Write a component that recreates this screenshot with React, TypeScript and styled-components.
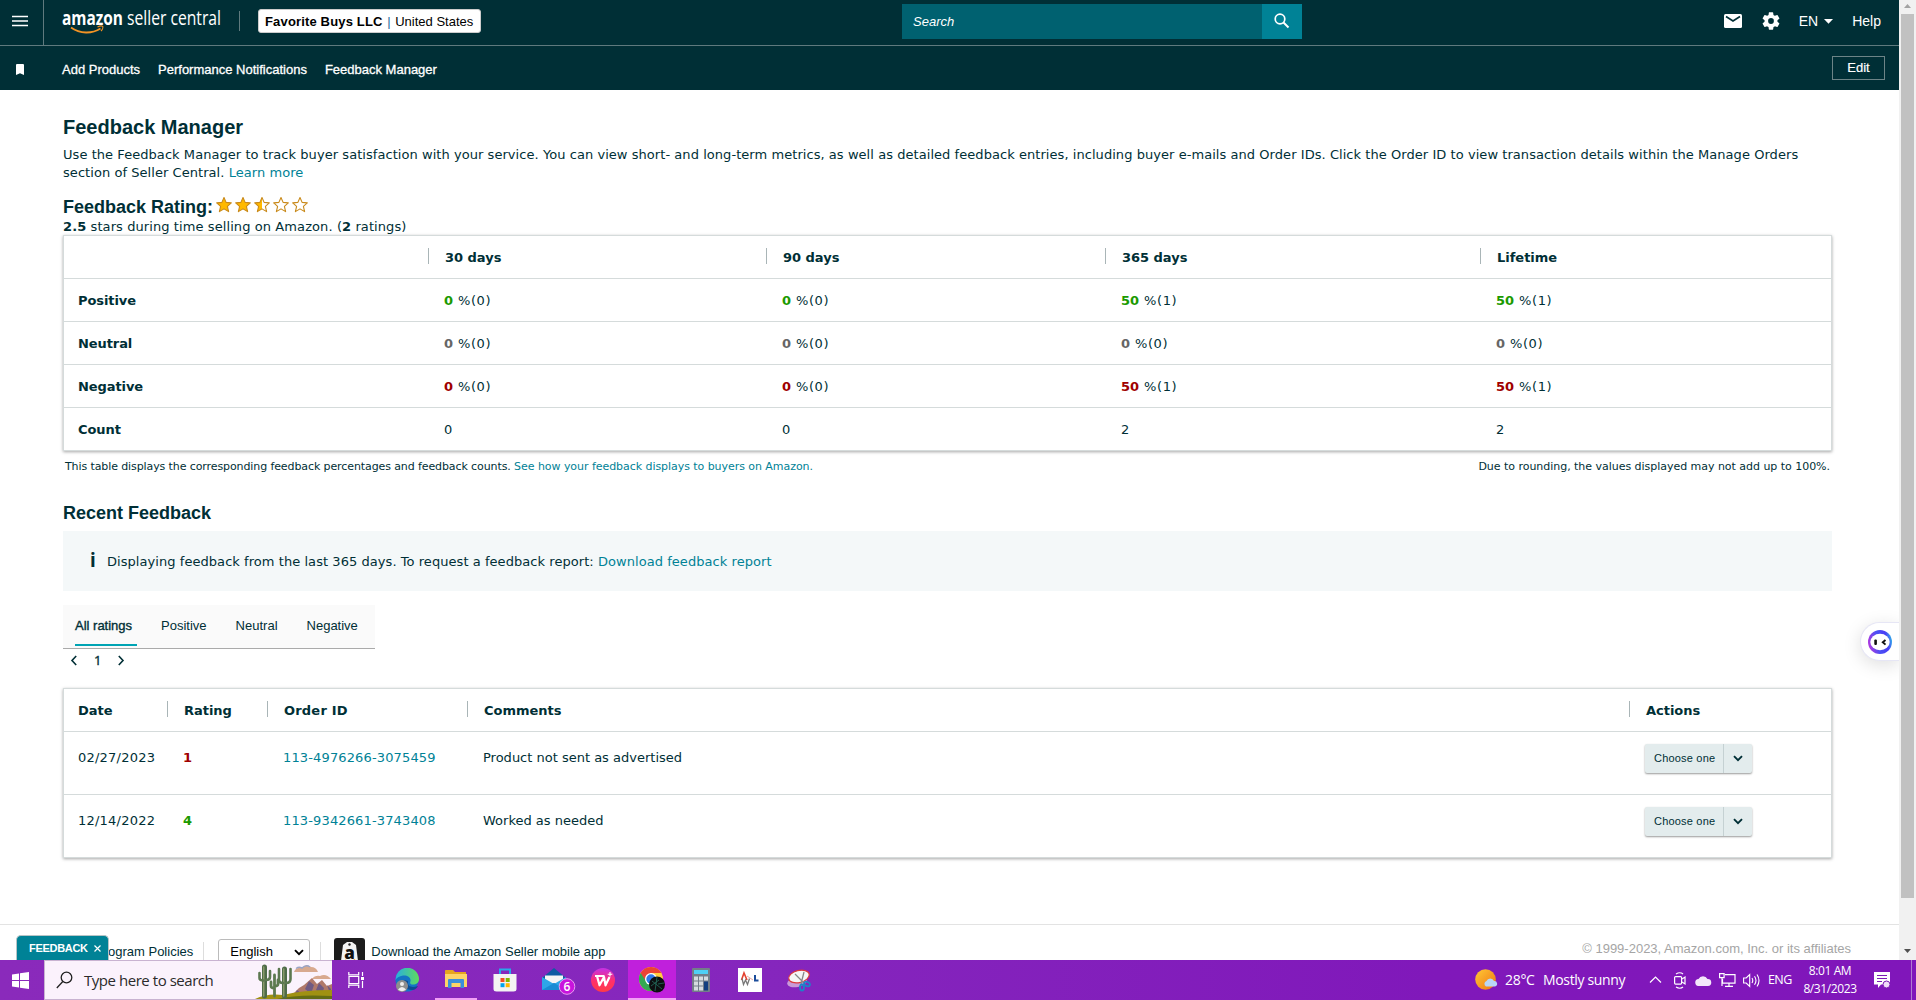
import React from "react";
import styled, { createGlobalStyle } from "styled-components";

const ARIAL = '"Liberation Sans", Arial, sans-serif';
const VERDANA = '"DejaVu Sans", Verdana, sans-serif';
const SEGOE = '"Open Sans", "Segoe UI", sans-serif';
const INK = "#002f36";
const LINK = "#008296";
const LINE = "#d5dbdb";

const Global = createGlobalStyle`
  html, body { margin: 0; padding: 0; background: #fff; overflow: hidden; }
  *, *::before, *::after { box-sizing: border-box; }
  h1, h2, p { margin: 0; }
  svg { display: block; flex: none; }
`;

const Screen = styled.div`
  width: 1916px;
  height: 1000px;
  display: flex;
  flex-direction: column;
  overflow: hidden;
  color: ${INK};
  font: 13px/18px ${VERDANA};
`;

const Viewport = styled.div`
  height: 960px;
  display: flex;
`;

const Page = styled.div`
  position: relative;
  width: 1899px;
  height: 960px;
  display: flex;
  flex-direction: column;
  overflow: hidden;
  background: #fff;
`;

/* ---------- header ---------- */
const TopBar = styled.header`
  flex: none;
  height: 46px;
  display: flex;
  background: ${INK};
  border-bottom: 1px solid #5f7a7e;
  color: #fff;
  font: 14px/20px ${ARIAL};
`;

const MenuCell = styled.div`
  width: 44px;
  padding: 15px 0 0 12px;
  border-right: 1px solid #5f7a7e;
`;

const Brand = styled.div`
  width: 196px;
  padding: 11px 0 0 18px;
  display: flex;
  justify-content: space-between;
`;

const BrandRule = styled.div`
  width: 1px;
  height: 20px;
  background: #5f7a7e;
`;

const StoreBadge = styled.div`
  width: 223px;
  height: 24px;
  margin: 9px 1px 0 18px;
  padding: 1px 0 0 6px;
  border: 1px solid #ccc;
  border-radius: 3px;
  background: #fff;
  color: #000;
  white-space: nowrap;
  font-size: 13px;
  line-height: 21px;

  b { letter-spacing: 0.16px; }
  i { font-style: normal; color: #2c6f9c; margin: 0 1px; }
`;

const SearchBox = styled.div`
  width: 400px;
  height: 35px;
  margin: 4px 0 0 420px;
  display: flex;
  background: #006170;
  font: italic 13px/35px ${ARIAL};
  padding-left: 11px;
  justify-content: space-between;
`;

const SearchButton = styled.div`
  width: 40px;
  height: 35px;
  display: flex;
  align-items: center;
  justify-content: center;
  padding-bottom: 2px;
  background: #008296;
`;

const HeaderTools = styled.div`
  margin-left: auto;
  padding: 0 18px 3px 0;
  display: flex;
  align-items: center;
`;

const Language = styled.div`
  display: flex;
  align-items: center;
  gap: 6px;
  margin: 0 19px 0 19px;
`;

const Gear = styled.span`
  margin-left: 20px;
`;

const NavBar = styled.nav`
  flex: none;
  height: 44px;
  display: flex;
  align-items: center;
  padding: 2px 14px 0 16px;
  background: ${INK};
  color: #fff;
  font: 13px/18px ${ARIAL};
`;

const NavLinks = styled.div`
  display: flex;
  gap: 18px;
  margin: 1px 0 0 38px;
  -webkit-text-stroke: 0.3px #fff;
`;

const EditButton = styled.div`
  width: 53px;
  height: 24px;
  margin: -2px 0 0 auto;
  border: 1px solid #6d8487;
  text-align: center;
  line-height: 22px;
  -webkit-text-stroke: 0.2px #fff;
`;

/* ---------- main content ---------- */
const Main = styled.main`
  display: flex;
  flex-direction: column;
  padding: 25px 67px 0 63px;
`;

const Title = styled.h1`
  font: bold 20px/24px ${ARIAL};
`;

const Intro = styled.p`
  margin-top: 7px;
  height: 36px;
  white-space: nowrap;
  letter-spacing: 0.055px;
`;

const Link = styled.span`
  color: ${LINK};
`;

const RatingHeading = styled.h2`
  margin-top: 14px;
  display: flex;
  gap: 3px;
  font: bold 18px/22px ${ARIAL};
`;

const Stars = styled.div`
  display: flex;
  gap: 3px;
`;

const RatingSummary = styled.p`
  height: 17px;
  line-height: 17px;
  letter-spacing: 0.09px;
`;

const TableFrame = styled.div`
  border: 1px solid ${LINE};
  box-shadow: 0 1px 3px rgba(0, 0, 0, 0.35);
`;

const Row = styled.div<{ $columns: string; $tall?: boolean }>`
  display: grid;
  grid-template-columns: ${(p) => p.$columns};
  height: ${(p) => (p.$tall ? 63 : 43)}px;
  line-height: ${(p) => (p.$tall ? 18 : 43)}px;
  border-bottom: 1px solid ${LINE};
  padding-top: ${(p) => (p.$tall ? 12 : 0)}px;

  &:last-child { border-bottom: 0; height: ${(p) => (p.$tall ? 62 : 42)}px; }
`;

const HeadCell = styled.div<{ $first?: boolean; $spacing?: number }>`
  height: 16px;
  margin-top: 12px;
  padding-left: ${(p) => (p.$first ? 14 : 16)}px;
  border-left: ${(p) => (p.$first ? 0 : 1)}px solid #a9b5b7;
  font-weight: bold;
  line-height: 19px;
  letter-spacing: ${(p) => p.$spacing ?? -0.02}px;
`;

const LabelCell = styled.div`
  padding-left: 14px;
  font-weight: bold;
  letter-spacing: -0.08px;
`;

const ValueCell = styled.div<{ $tone?: string }>`
  padding-left: 16px;
  b { color: ${(p) => p.$tone}; }
`;

const Share = styled.span`
  margin-left: 5px;
  letter-spacing: 0.55px;
`;

const EntryCell = styled.div<{ $first?: boolean; $spacing?: number }>`
  padding: 5px 0 0 ${(p) => (p.$first ? 14 : 16)}px;
  letter-spacing: ${(p) => p.$spacing ?? 0}px;
`;

const RatingValue = styled.b<{ $bad?: boolean }>`
  color: ${(p) => (p.$bad ? "#a00000" : "#1b9a00")};
`;

const FootNote = styled.div`
  margin-top: 8px;
  padding: 0 2px;
  display: flex;
  justify-content: space-between;
  font-size: 11px;
  line-height: 16px;
  white-space: nowrap;
`;

const NoteText = styled.span<{ $spacing: number }>`
  letter-spacing: ${(p) => p.$spacing}px;
  ${Link} { letter-spacing: -0.05px; }
`;

const SectionTitle = styled.h2`
  margin-top: 27px;
  font: bold 18px/22px ${ARIAL};
`;

const InfoBanner = styled.div`
  height: 60px;
  margin-top: 7px;
  padding: 1px 0 0 27px;
  display: flex;
  align-items: center;
  background: #f4f8f9;
  letter-spacing: 0.055px;
`;

const InfoMark = styled.span`
  width: 17px;
  height: 22px;
  font: bold 19px/19px "Noto Sans", sans-serif;
`;

const Tabs = styled.div`
  width: 312px;
  height: 44px;
  margin-top: 14px;
  padding-left: 12px;
  display: flex;
  gap: 24px;
  background: #fafafa;
  border-bottom: 1px solid #aaa;
  font: 13px/41px ${ARIAL};
`;

const Tab = styled.div<{ $active?: boolean }>`
  height: 41px;
  padding-right: 5px;
  border-bottom: ${(p) => (p.$active ? 2 : 0)}px solid #00a4b4;
  -webkit-text-stroke: ${(p) => (p.$active ? 0.35 : 0)}px ${INK};
  white-space: nowrap;
`;

const Pager = styled.div`
  height: 39px;
  padding: 2px 0 0 7px;
  display: flex;
  gap: 16px;
  font: 13px/19px "Noto Sans", sans-serif;
  -webkit-text-stroke: 0.3px ${INK};
  svg { margin-top: 4px; }
`;

const ChooseButton = styled.div`
  width: 107px;
  height: 29px;
  margin-left: 16px;
  display: flex;
  background: #e3eced;
  border-radius: 2px;
  box-shadow: 0 1px 2px rgba(0, 0, 0, 0.4);
  font: 11px/28px ${ARIAL};
  letter-spacing: 0.2px;
`;

const ChooseLabel = styled.div`
  width: 79px;
  padding-left: 9px;
  border-right: 1px solid #c5d1d3;
`;

const ChooseArrow = styled.div`
  flex: 1;
  display: flex;
  align-items: center;
  justify-content: center;
  padding-bottom: 1px;
`;

/* ---------- footer ---------- */
const Footer = styled.footer`
  height: 36px;
  margin-top: auto;
  padding: 0 48px 0 95px;
  display: flex;
  align-items: flex-start;
  border-top: 1px solid #e3e3e3;
  font: 13px/18px ${ARIAL};
  white-space: nowrap;
`;

const FooterText = styled.span`
  margin-top: 18px;
`;

const FooterRule = styled.span<{ $gap: string }>`
  width: 1px;
  height: 24px;
  margin: 17px 0 0;
  margin-inline: ${(p) => p.$gap};
  background: #ddd;
`;

const LanguageSelect = styled.div`
  width: 92px;
  height: 30px;
  margin-top: 14px;
  padding: 3px 5px 0 11px;
  display: flex;
  justify-content: space-between;
  border: 1px solid #bbb;
  border-radius: 3px;
  color: #000;
  svg { margin-top: 6px; }
`;

const AppIcon = styled.div`
  height: 22px;
  margin: 13px 6px 0 13px;
  overflow: hidden;
`;

const Copyright = styled.span`
  margin: 15px 0 0 auto;
  color: #a5a5a5;
`;

/* ---------- floating items ---------- */
const FeedbackTab = styled.div`
  position: absolute;
  left: 16px;
  bottom: 0;
  width: 93px;
  height: 25px;
  padding: 2px 0 0 12px;
  display: flex;
  gap: 6px;
  background: #008296;
  border: 1px solid #b8c4c6;
  border-bottom: 0;
  border-radius: 5px 5px 0 0;
  color: #fff;
  font: bold 11px/21px ${ARIAL};
  letter-spacing: -0.3px;
  svg { margin-top: 7px; }
`;

const Assistant = styled.div`
  position: absolute;
  right: 0;
  top: 622px;
  width: 39px;
  height: 39px;
  padding: 7px 0 0 7px;
  border: 1px solid #e6e6f5;
  border-right: 0;
  border-radius: 20px 0 0 20px;
  background: #fff;
  box-shadow: 0 4px 18px rgba(0, 0, 0, 0.13);
`;

/* ---------- scrollbar ---------- */
const ScrollTrack = styled.div`
  width: 17px;
  height: 960px;
  padding: 4px 2px 7px;
  display: flex;
  flex-direction: column;
  align-items: center;
  background: #f1f1f1;
`;

const ScrollThumb = styled.div`
  width: 13px;
  height: 884px;
  margin: 6px 0 auto;
  background: #c1c1c1;
`;

/* ---------- taskbar ---------- */
const Taskbar = styled.div`
  height: 40px;
  display: flex;
  background: linear-gradient(90deg, #8a2abb 0%, #8526bd 40%, #8018ba 75%, #8016ba 100%);
  color: #fff;
  font: 14px/20px ${SEGOE};
`;

const StartCell = styled.div`
  width: 44px;
  padding: 12px 0 0 12px;
`;

const TaskSearch = styled.div`
  width: 288px;
  height: 40px;
  display: flex;
  border: 1px solid #c9b3d1;
  border-right: 0;
  background: #fbf2fc;
  color: #2b2b2b;
  font: 15px/39px ${SEGOE};
  letter-spacing: -0.46px;
  white-space: nowrap;
`;

const TaskSearchGlyph = styled.div`
  width: 39px;
  padding: 10px 0 0 11px;
`;

const TaskSearchText = styled.div`
  width: 169px;
`;

const TaskCell = styled.div<{ $active?: boolean; $line?: boolean; $first?: boolean }>`
  width: 48px;
  height: 40px;
  margin-left: ${(p) => (p.$first ? 0 : 1)}px;
  margin-right: ${(p) => (p.$first ? 2 : 0)}px;
  display: flex;
  align-items: center;
  justify-content: center;
  background: ${(p) => (p.$active ? "#c020dc" : "transparent")};
  box-shadow: ${(p) => (p.$active ? "inset 0 -2px #f2a0f5" : "none")};
  border-image: ${(p) => (p.$line ? "linear-gradient(90deg, transparent 4px, #f2a0f5 4px, #f2a0f5 44px, transparent 44px) 1" : "none")};
  border-bottom: ${(p) => (p.$line ? "2px solid" : "0")};
`;

const Tray = styled.div`
  margin-left: auto;
  display: flex;
  align-items: center;
  white-space: nowrap;
`;

const TrayText = styled.span<{ $w: number; $spacing: number; $size?: number }>`
  width: ${(p) => p.$w}px;
  font-size: ${(p) => p.$size ?? 14}px;
  letter-spacing: ${(p) => p.$spacing}px;
`;

const TrayIcon = styled.span<{ $w: number }>`
  width: ${(p) => p.$w}px;
`;

const Clock = styled.div`
  width: 72px;
  text-align: center;
  font-size: 12px;
  line-height: 18px;
  letter-spacing: -0.4px;
`;

const DesktopEdge = styled.div`
  width: 1px;
  height: 40px;
  margin: 0 4px 0 20px;
  background: #b07ad2;
`;

const STAR = "M8 1l2.1 4.9 5.2.5-3.9 3.5 1.2 5.2L8 12.4l-4.6 2.7 1.2-5.2L.7 6.4l5.2-.5z";

const Star = ({ fill }: { fill: number }) => (
  <svg width="16" height="17" viewBox="0 0 16 16">
    <defs>
      <linearGradient id={`star${fill}`}>
        <stop offset={fill} stopColor="#ffb900" />
        <stop offset={fill} stopColor="#fff" />
      </linearGradient>
    </defs>
    <path d={STAR} fill={`url(#star${fill})`} stroke="#c98a1b" strokeWidth="1.1" strokeLinejoin="round" />
  </svg>
);

const CHEVRONS = {
  left: { d: "M6.200 1L2 5.500l4.200 4.500", w: 8, h: 11, stroke: 1.6 },
  right: { d: "M1.800 1L6 5.500l-4.200 4.500", w: 8, h: 11, stroke: 1.6 },
  down: { d: "M1 1.200L5 5.200 9 1.200", w: 10, h: 7, stroke: 1.9 },
  up: { d: "M1 6.500L6.500 1 12 6.500", w: 13, h: 8, stroke: 1.2 },
};

const Chevron = ({ dir }: { dir: keyof typeof CHEVRONS }) => {
  const c = CHEVRONS[dir];
  return (
    <svg width={c.w} height={c.h} viewBox={`0 0 ${c.w} ${c.h}`}>
      <path d={c.d} fill="none" stroke="currentColor" strokeWidth={c.stroke} />
    </svg>
  );
};

const BrandLogo = () => (
  <svg width="162" height="26" viewBox="0 0 162 26" overflow="visible">
    <text x="0" y="14.300" textLength="61" lengthAdjust="spacingAndGlyphs" fill="#fff" fontFamily="Open Sans, sans-serif" fontWeight="700" fontSize="20">amazon</text>
    <text x="65" y="14" textLength="94" lengthAdjust="spacingAndGlyphs" fill="#fff" fontFamily="Open Sans, sans-serif" fontWeight="400" fontSize="19.500">seller central</text>
    <path d="M9 16.500c9 6.500 21 6.500 29.500 1" fill="none" stroke="#f29325" strokeWidth="1.800" />
    <path d="M35.500 16c2-1 4.500-1.200 5.200-.6.500.8-.3 3.200-1.700 4.600" fill="none" stroke="#f29325" strokeWidth="1.200" />
  </svg>
);

const SUMMARY_COLUMNS = "364px 338px 339px 375px 1fr";
const SUMMARY_HEAD = ["30 days", "90 days", "365 days", "Lifetime"];
const SUMMARY = [
  { label: "Positive", tone: "#1b9a00", values: [[0, 0], [0, 0], [50, 1], [50, 1]] },
  { label: "Neutral", tone: "#666", values: [[0, 0], [0, 0], [0, 0], [0, 0]] },
  { label: "Negative", tone: "#a00000", values: [[0, 0], [0, 0], [50, 1], [50, 1]] },
];
const COUNTS = [0, 0, 2, 2];

const ENTRY_COLUMNS = "103px 100px 200px 1162px 1fr";
const ENTRIES = [
  { date: "02/27/2023", rating: 1, order: "113-4976266-3075459", comment: "Product not sent as advertised" },
  { date: "12/14/2022", rating: 4, order: "113-9342661-3743408", comment: "Worked as needed" },
];

const Header = () => (
  <>
    <TopBar>
      <MenuCell>
        <svg width="16" height="12" viewBox="0 0 16 12"><path d="M0 1.500h16M0 6h16M0 10.500h16" stroke="#fff" strokeWidth="1.700" /></svg>
      </MenuCell>
      <Brand><BrandLogo /><BrandRule /></Brand>
      <StoreBadge><b>Favorite Buys LLC</b> <i>|</i> United States</StoreBadge>
      <SearchBox>
        Search
        <SearchButton>
          <svg width="16" height="16" viewBox="0 0 16 16" fill="none" stroke="#fff"><circle cx="6" cy="6" r="4.800" strokeWidth="1.700" /><path d="M9.500 9.500l5 5" strokeWidth="2" /></svg>
        </SearchButton>
      </SearchBox>
      <HeaderTools>
        <svg width="18" height="14" viewBox="0 0 18 14"><rect width="18" height="14" rx="1.500" fill="#fff" /><path d="M2 2.500l7 4.500 7-4.500" fill="none" stroke={INK} strokeWidth="1.700" /></svg>
        <Gear>
          <svg width="18" height="18" viewBox="2 2 20 20"><path fill="#fff" d="M19.140 12.940c.04-.3.06-.61.06-.94 0-.32-.02-.64-.07-.94l2.030-1.580a.49.490 0 0 0 .12-.61l-1.920-3.320a.488.488 0 0 0-.59-.22l-2.390.96c-.5-.38-1.030-.7-1.620-.94l-.36-2.540a.484.484 0 0 0-.48-.41h-3.840c-.24 0-.43.170-.47.410l-.36 2.540c-.59.240-1.130.570-1.620.940l-2.390-.96a.48.480 0 0 0-.59.220L2.740 8.870c-.12.210-.08.470.12.610l2.030 1.580c-.05.300-.09.630-.09.940s.02.640.07.940l-2.030 1.580a.49.490 0 0 0-.12.610l1.920 3.320c.12.220.37.290.59.220l2.390-.96c.5.380 1.030.700 1.620.940l.36 2.540c.05.240.24.410.48.410h3.840c.24 0 .44-.17.47-.41l.36-2.540c.59-.24 1.130-.56 1.620-.94l2.390.96c.22.080.47 0 .59-.22l1.920-3.320a.49.490 0 0 0-.12-.61zM12 15.200A3.200 3.200 0 1 1 12 8.800a3.200 3.200 0 0 1 0 6.400z" /></svg>
        </Gear>
        <Language>
          EN
          <svg width="9" height="5" viewBox="0 0 9 5"><path d="M0 0h9L4.500 4.800z" fill="#fff" /></svg>
        </Language>
        Help
      </HeaderTools>
    </TopBar>
    <NavBar>
      <svg width="8" height="11" viewBox="0 0 8 11"><path d="M1 0h6a1 1 0 0 1 1 1v10L4 9.300 0 11V1a1 1 0 0 1 1-1z" fill="#fff" /></svg>
      <NavLinks>
        <span>Add Products</span>
        <span>Performance Notifications</span>
        <span>Feedback Manager</span>
      </NavLinks>
      <EditButton>Edit</EditButton>
    </NavBar>
  </>
);

const SummaryTable = () => (
  <TableFrame>
    <Row $columns={SUMMARY_COLUMNS}>
      <span />
      {SUMMARY_HEAD.map((h) => <HeadCell key={h}>{h}</HeadCell>)}
    </Row>
    {SUMMARY.map((r) => (
      <Row key={r.label} $columns={SUMMARY_COLUMNS}>
        <LabelCell>{r.label}</LabelCell>
        {r.values.map(([pct, n], i) => <ValueCell key={i} $tone={r.tone}><b>{pct}</b><Share>%({n})</Share></ValueCell>)}
      </Row>
    ))}
    <Row $columns={SUMMARY_COLUMNS}>
      <LabelCell>Count</LabelCell>
      {COUNTS.map((n, i) => <ValueCell key={i}>{n}</ValueCell>)}
    </Row>
  </TableFrame>
);

const EntryTable = () => (
  <TableFrame>
    <Row $columns={ENTRY_COLUMNS}>
      <HeadCell $first>Date</HeadCell>
      <HeadCell>Rating</HeadCell>
      <HeadCell $spacing={0.2}>Order ID</HeadCell>
      <HeadCell>Comments</HeadCell>
      <HeadCell>Actions</HeadCell>
    </Row>
    {ENTRIES.map((e) => (
      <Row key={e.order} $columns={ENTRY_COLUMNS} $tall>
        <EntryCell $first $spacing={0.22}>{e.date}</EntryCell>
        <EntryCell><RatingValue $bad={e.rating < 3}>{e.rating}</RatingValue></EntryCell>
        <EntryCell $spacing={0.14}><Link>{e.order}</Link></EntryCell>
        <EntryCell>{e.comment}</EntryCell>
        <ChooseButton>
          <ChooseLabel>Choose one</ChooseLabel>
          <ChooseArrow><Chevron dir="down" /></ChooseArrow>
        </ChooseButton>
      </Row>
    ))}
  </TableFrame>
);

const SearchArt = () => (
  <svg width="79" height="38" viewBox="0 0 79 38">
    <path d="M41 11q2-5 8-4 4-5 9-1 5 0 7 5zM59 18q3-4 8-3 6-3 11 3z" fill="#d8a98f" />
    <path d="M43 7.500q3-2 6-.5 4-4 8-1" fill="none" stroke="#9aa4c6" strokeWidth="1.500" />
    <path d="M38 35l8-8 5-3 8-7 5 6 5-4 5 6 5-2v13H38z" fill="#b0786a" />
    <path d="M56 20l5 4-3 9-6-5zM66 22l5 5-2 7-6-5zM44 29l5 4-8 2zM74 24l4 4v7z" fill="#705a83" />
    <path d="M2 38q12-6 28-4 20-5 49-5v9z" fill="#a09112" />
    <path d="M24 38q20-5 55-3v3z" fill="#646c14" />
    <g fill="none" strokeLinecap="round" strokeLinejoin="round">
      <path d="M11.500 35V6M31.500 35V8" stroke="#4f6c49" strokeWidth="5" />
      <path d="M10.700 35V6M30.700 35V8" stroke="#8a9a6a" strokeWidth="1.500" />
      <path d="M6.500 12v5q0 2.500 4 2.500M17 10v6q0 3-4 3M26 8v11q0 3 4 3M37.500 8v10q0 4-4.500 4" stroke="#5c7850" strokeWidth="2.600" />
      <path d="M21.500 35V14M18 21v4q0 2 3 2M25 19v4q0 2-3 2" stroke="#5d7a50" strokeWidth="2.800" />
    </g>
  </svg>
);

const TaskbarRow = () => (
  <Taskbar>
    <StartCell>
      <svg width="17" height="17" viewBox="0 0 17 17"><path fill="#fff" d="M0 2.500l7-1v6.500H0zM8 1.300L17 0v8H8zM0 9h7v6.500l-7-1zM8 9h9v8l-9-1.300z" /></svg>
    </StartCell>
    <TaskSearch>
      <TaskSearchGlyph>
        <svg width="17" height="18" viewBox="0 0 17 18" fill="none" stroke="#222" strokeWidth="1.300"><circle cx="10.500" cy="6.500" r="5.300" /><path d="M6.800 10.500L.8 17" /></svg>
      </TaskSearchGlyph>
      <TaskSearchText>Type here to search</TaskSearchText>
      <SearchArt />
    </TaskSearch>
    <TaskCell $first>
      <svg width="16" height="16" viewBox="0 0 16 16" fill="none" stroke="#fff" strokeWidth="1.200"><path d="M.8 0v2.800h9.900V0M.8 16v-2.800h9.900V16M1 4.500h9.700v7H1zM14.500 0v4M14.500 9v7" /><path d="M13 5h3v3h-3z" fill="#fff" stroke="none" /></svg>
    </TaskCell>
    <TaskCell>
      <svg width="25" height="25" viewBox="0 0 25 25">
        <defs>
          <linearGradient id="edgeTop" x1="0" x2="1"><stop stopColor="#28aee0" /><stop offset="1" stopColor="#5fdc5d" /></linearGradient>
        </defs>
        <circle cx="12" cy="12" r="11.500" fill="#1474c4" />
        <path d="M.5 12A11.500 11.500 0 0 1 24 11c0 4-3 5.500-6 5.500-3.500 0-3-2-2.500-3.500C16 9 12 7 8 7.500 4 8 1.500 10 .5 12z" fill="url(#edgeTop)" />
        <path d="M9 12c-2 5 2 10 8 10 3 0 5-2 6-4-6 2-11 1-10-5z" fill="#0c4d93" />
        <circle cx="7" cy="18" r="6" fill="#8e8e8e" /><circle cx="7" cy="16" r="2" fill="#eee" /><path d="M3 21.500q4-5 8 0-4 3.500-8 0z" fill="#eee" />
      </svg>
    </TaskCell>
    <TaskCell $line>
      <svg width="22" height="20" viewBox="0 0 22 20">
        <path d="M0 1.500Q0 1 1 1h7l2 2h11v15H0z" fill="#e6a520" /><path d="M0 5h22v13H0z" fill="#fdd467" />
        <path d="M3 19v-8q0-1 1-1h14q1 0 1 1v8h-3.500v-5h-9v5z" fill="#3b8fdb" />
      </svg>
    </TaskCell>
    <TaskCell>
      <svg width="24" height="24" viewBox="0 0 24 24">
        <path d="M7 7V1.500h10V7" fill="none" stroke="#28a8ea" strokeWidth="2" /><path d="M.5 6h23v15q0 2.500-3 2.500H3.500q-3 0-3-2.500z" fill="#f3f3f3" />
        <path d="M7.500 10h4v4h-4z" fill="#f25022" /><path d="M12.700 10h4v4h-4z" fill="#7fba00" /><path d="M7.500 15.200h4v4h-4z" fill="#00a4ef" /><path d="M12.700 15.200h4v4h-4z" fill="#ffb900" />
      </svg>
    </TaskCell>
    <TaskCell>
      <svg width="26" height="28" viewBox="0 0 26 28" overflow="visible">
        <path d="M1 12L13 2l12 10v12H1z" fill="#0e5ba3" /><path d="M4 9.500h18v8H4z" fill="#f5f5f5" /><path d="M1 11l12 7 12-7v13H1z" fill="#2ea6e8" /><path d="M1 24l12-7 12 7z" fill="#1a8bd4" />
        <circle cx="26" cy="20.500" r="7.800" fill="#c914dd" stroke="#e79cf0" strokeWidth="1" />
        <text x="26" y="24.700" textAnchor="middle" fontFamily="Open Sans, sans-serif" fontWeight="600" fontSize="12" fill="#fff">6</text>
      </svg>
    </TaskCell>
    <TaskCell>
      <svg width="24" height="24" viewBox="0 0 24 24">
        <defs><linearGradient id="wps" x2="0" y2="1"><stop stopColor="#c531e6" /><stop offset=".55" stopColor="#ff2f6b" /><stop offset="1" stopColor="#ff3b45" /></linearGradient></defs>
        <circle cx="12" cy="12" r="12" fill="url(#wps)" />
        <path d="M4 8h9.500M6 8l2.500 9.300L13 9l1.500 8.300L18.500 9" fill="none" stroke="#fff" strokeWidth="2.200" strokeLinejoin="round" />
        <path d="M19 4v4.600M16.700 6.300h4.600" stroke="#fff" strokeWidth="1.100" />
      </svg>
    </TaskCell>
    <TaskCell $active>
      <svg width="28" height="28" viewBox="0 0 28 28">
        <circle cx="13" cy="13" r="12" fill="#ffcd40" /><path d="M2.600 7A12 12 0 0 0 13 25l5-9-5-3z" fill="#34a853" /><path d="M13 7h10.400A12 12 0 0 0 2.600 7L8 15z" fill="#ea4335" />
        <circle cx="13" cy="13" r="6" fill="#fff" /><circle cx="13" cy="13" r="4.700" fill="#2f78e8" />
        <circle cx="19" cy="18.500" r="8" fill="#0d0f11" /><path d="M14 15l10 8M13 20l8-6M17 25l2-14M20 18l6-1" stroke="#24705f" strokeWidth=".8" />
      </svg>
    </TaskCell>
    <TaskCell>
      <svg width="18" height="24" viewBox="0 0 18 24">
        <rect width="18" height="24" rx="1" fill="#737d89" /><path d="M2 2h14v4H2z" fill="#4fd0f5" />
        <path d="M2 8.500h4v4H2zM7 8.500h4v4H7zM12 8.500h4v4h-4zM2 13.500h4v4H2zM7 13.500h4v4H7zM2 18.500h4v4H2zM7 18.500h4v4H7z" fill="#d6dbe0" /><path d="M12 13.500h4v9h-4z" fill="#123f80" />
      </svg>
    </TaskCell>
    <TaskCell>
      <svg width="24" height="24" viewBox="0 0 24 24">
        <path d="M0 0h24v24H0z" fill="#fff" /><path d="M3.500 12l2.500-7 3 7" fill="none" stroke="#e4402f" strokeWidth="1.600" /><path d="M4 10.500l1.500 6 2-4.500 2 4.500 2-6" fill="none" stroke="#777" strokeWidth="1.300" /><path d="M17 7v5.500h3.500" fill="none" stroke="#1b4d9b" strokeWidth="2" /><path d="M9 8l6 4" stroke="#e9aaa5" strokeWidth="1" />
      </svg>
    </TaskCell>
    <TaskCell>
      <svg width="24" height="24" viewBox="0 0 24 24">
        <ellipse cx="10" cy="14" rx="10" ry="5" fill="#c99ad8" transform="rotate(-12 10 14)" /><ellipse cx="12" cy="8.500" rx="10.500" ry="6" fill="#f6f6f6" stroke="#dd3b3b" strokeWidth="1.200" transform="rotate(-14 12 8.500)" />
        <path d="M8 6l9 9M17 4l-3 12" stroke="#888" strokeWidth="1.300" /><g fill="none" stroke="#1e82c8" strokeWidth="1.800"><ellipse cx="15" cy="19.500" rx="2" ry="3" /><ellipse cx="20" cy="16" rx="3" ry="2" transform="rotate(25 20 16)" /></g>
      </svg>
    </TaskCell>
    <Tray>
      <TrayIcon $w={30}>
        <svg width="23" height="22" viewBox="0 0 23 22"><defs><linearGradient id="sun" x2="1" y2="1"><stop stopColor="#ffc935" /><stop offset="1" stopColor="#ef7414" /></linearGradient></defs><circle cx="10.500" cy="10.500" r="10.300" fill="url(#sun)" /><path d="M11 17.500a3 3 0 0 1 .5-5.500 4 4 0 0 1 7.500 0 2.800 2.800 0 0 1 1 5.500z" fill="#b9d6f5" /></svg>
      </TrayIcon>
      <TrayText $w={38} $spacing={-0.3}>28°C</TrayText>
      <TrayText $w={106} $spacing={-0.35}>Mostly sunny</TrayText>
      <TrayIcon $w={25}><Chevron dir="up" /></TrayIcon>
      <TrayIcon $w={21}>
        <svg width="12" height="17" viewBox="0 0 12 17" fill="none" stroke="#fff" strokeWidth="1.200"><path d="M2 2q4-2.500 7 0M2 15q4 2.500 7 0" /><rect x=".6" y="4.600" width="7" height="7.500" rx="1" /><path d="M8 7l3-2v7L8 10" /></svg>
      </TrayIcon>
      <TrayIcon $w={24}>
        <svg width="17" height="11" viewBox="0 0 17 11"><path d="M4 11a3.500 3.500 0 0 1-.5-7A5 5 0 0 1 12.500 4 3.500 3.500 0 0 1 13 11z" fill="#f3e6fa" /></svg>
      </TrayIcon>
      <TrayIcon $w={24}>
        <svg width="17" height="14" viewBox="0 0 17 14" fill="none" stroke="#fff" strokeWidth="1.200"><path d="M6 1.600h10v8.500H3.500V6M10 10v3M6 13.300h8M.6.600h4.500v4H.6zM3 5v8" /></svg>
      </TrayIcon>
      <TrayIcon $w={25}>
        <svg width="17" height="15" viewBox="0 0 17 15" fill="none" stroke="#fff" strokeWidth="1.100"><path d="M.6 5h2.600l3.500-3.500v12L3.200 10H.6zM9 5q1.500 2.500 0 5M11.500 3.200q3 4.300 0 8.600M14 1.500q4 6 0 12" /></svg>
      </TrayIcon>
      <TrayText $w={26} $spacing={-0.6} $size={12.5}>ENG</TrayText>
      <Clock>8:01 AM<br />8/31/2023</Clock>
      <TrayIcon $w={25}>
        <svg width="24" height="17" viewBox="-8 0 24 17"><path d="M0 0h16v12.500H7L4 16v-3.500H0z" fill="#fff" /><path d="M3 3.500h10M3 6.500h10M3 9.500h5" stroke="#7b1cb4" strokeWidth="1.200" /><circle cx="12.500" cy="12.500" r="3.500" fill="#f0dcf8" stroke="#7b1cb4" /></svg>
      </TrayIcon>
      <DesktopEdge />
    </Tray>
  </Taskbar>
);

export default function App() {
  return (
    <Screen>
      <Global />
      <Viewport>
        <Page>
          <Header />
          <Main>
            <Title>Feedback Manager</Title>
            <Intro>
              Use the Feedback Manager to track buyer satisfaction with your service. You can view short- and long-term metrics, as well as detailed feedback entries, including buyer e-mails and Order IDs. Click the Order ID to view transaction details within the Manage Orders<br />
              section of Seller Central. <Link>Learn more</Link>
            </Intro>
            <RatingHeading>
              Feedback Rating:
              <Stars>{[1, 1, 0.5, 0, 0].map((f, i) => <Star key={i} fill={f} />)}</Stars>
            </RatingHeading>
            <RatingSummary><b>2.5</b> stars during time selling on Amazon. (<b>2</b> ratings)</RatingSummary>
            <SummaryTable />
            <FootNote>
              <NoteText $spacing={-0.1}>This table displays the corresponding feedback percentages and feedback counts. <Link>See how your feedback displays to buyers on Amazon.</Link></NoteText>
              <NoteText $spacing={-0.03}>Due to rounding, the values displayed may not add up to 100%.</NoteText>
            </FootNote>
            <SectionTitle>Recent Feedback</SectionTitle>
            <InfoBanner>
              <InfoMark>i</InfoMark>
              <span>Displaying feedback from the last 365 days. To request a feedback report: <Link>Download feedback report</Link></span>
            </InfoBanner>
            <Tabs>
              <Tab $active>All ratings</Tab>
              <Tab>Positive</Tab>
              <Tab>Neutral</Tab>
              <Tab>Negative</Tab>
            </Tabs>
            <Pager><Chevron dir="left" /><span>1</span><Chevron dir="right" /></Pager>
            <EntryTable />
          </Main>
          <Footer>
            <FooterText>Program Policies</FooterText>
            <FooterRule $gap="10px 14px" />
            <LanguageSelect>English<Chevron dir="down" /></LanguageSelect>
            <FooterRule $gap="10px 0" />
            <AppIcon>
              <svg width="31" height="31" viewBox="0 0 31 31">
                <rect width="31" height="31" rx="3" fill="#1c1c1c" /><path d="M9 7l4-3h5l4 3 3 24H6z" fill="#f4f4f4" /><circle cx="15.500" cy="6.500" r="1.200" fill="#222" />
                <text x="15.500" y="20.500" textAnchor="middle" fontFamily="Open Sans, sans-serif" fontWeight="800" fontSize="17" fill="#111">a</text>
                <path d="M11 22q6 3 10-.5" fill="none" stroke="#f29325" strokeWidth="1.300" />
              </svg>
            </AppIcon>
            <FooterText>Download the Amazon Seller mobile app</FooterText>
            <Copyright>© 1999-2023, Amazon.com, Inc. or its affiliates</Copyright>
          </Footer>
          <FeedbackTab>
            FEEDBACK
            <svg width="7" height="7" viewBox="0 0 7 7"><path d="M.5.500l6 6M6.500.500l-6 6" stroke="#fff" strokeWidth="1.200" /></svg>
          </FeedbackTab>
          <Assistant>
            <svg width="24" height="24" viewBox="0 0 24 24">
              <defs><linearGradient id="ring" x1="0" y1=".7" x2="1" y2=".5"><stop stopColor="#b637e0" /><stop offset=".45" stopColor="#4a50f4" /><stop offset=".8" stopColor="#4a3df5" /><stop offset="1" stopColor="#35a5ea" /></linearGradient></defs>
              <circle cx="12" cy="12" r="12" fill="url(#ring)" /><ellipse cx="12" cy="12" rx="9.700" ry="8.300" fill="#fff" />
              <rect x="6.300" y="9.500" width="2.600" height="5.500" rx="1" fill="#111" /><path d="M17.500 10l-2.700 2.300 2.700 2.300" fill="none" stroke="#111" strokeWidth="1.900" />
            </svg>
          </Assistant>
        </Page>
        <ScrollTrack>
          <svg width="7" height="4" viewBox="0 0 7 4"><path d="M0 4L3.500 0 7 4z" fill="#a3a3a3" /></svg>
          <ScrollThumb />
          <svg width="7" height="4" viewBox="0 0 7 4"><path d="M0 0h7L3.500 4z" fill="#505050" /></svg>
        </ScrollTrack>
      </Viewport>
      <TaskbarRow />
    </Screen>
  );
}
